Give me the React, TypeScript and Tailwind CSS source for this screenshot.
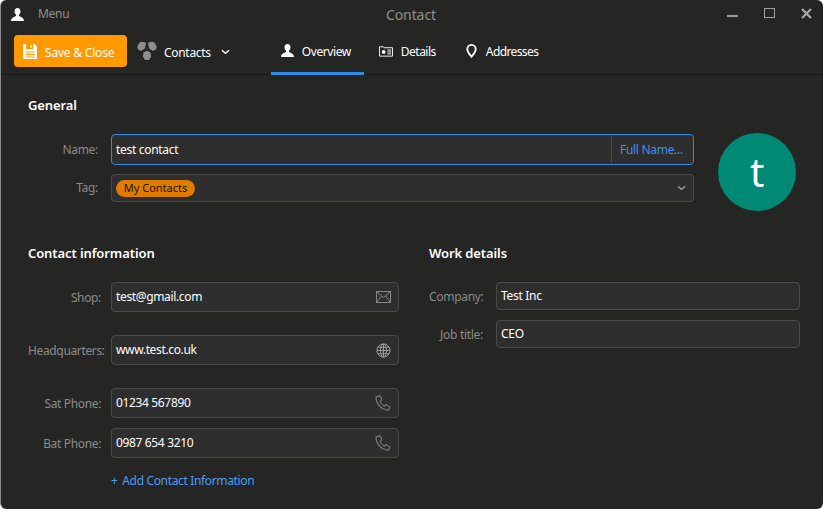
import React from "react";

const Person = ({ className = "" }: { className?: string }) => (
  <svg viewBox="0 0 13 13" className={className} fill="currentColor">
    <path d="M6.500 0C4.600 0 3.500 1.400 3.500 3.300c0 1.500.6 2.700 1.500 3.400v1.200C3.500 8.800.3 9.300 0 13h13c-.3-3.700-3.500-4.200-5-5.100V6.700c.9-.7 1.500-1.900 1.500-3.400C9.500 1.400 8.400 0 6.500 0z" />
  </svg>
);

const Phone = () => (
  <svg viewBox="0 0 16 16" className="w-[16px] h-[16px] text-[#808080]" fill="none" stroke="currentColor" strokeWidth="1.100">
    <path d="M1.800 1.600 4.300 .9c.5-.1.800.1 1 .5l1.300 2.900c.1.400 0 .7-.3 1L5 6.400c.8 2 2.300 3.700 4.300 4.700l1.300-1.100c.3-.2.600-.3 1-.1l2.800 1.700c.4.200.5.600.3 1l-.9 2c-.3.500-.9.800-1.800.7C6.500 14.500 1.400 8.800 1 3.500c-.1-.9.200-1.500.8-1.900z" />
  </svg>
);

const Mail = () => (
  <svg viewBox="0 0 15 12" className="w-[15px] h-[12px] text-[#8a8a8a]" fill="none" stroke="currentColor" strokeWidth="1">
    <rect x=".5" y=".5" width="14" height="11" />
    <path d="M.5.5 7.500 6.500 14.500.5M.5 11.500 5.500 5M14.500 11.500 9.500 5" />
  </svg>
);

const Globe = () => (
  <svg viewBox="0 0 16 16" className="w-[15px] h-[15px] text-[#a0a0a0]" fill="none" stroke="currentColor" strokeWidth="1">
    <circle cx="8" cy="8" r="7" />
    <ellipse cx="8" cy="8" rx="3.200" ry="7" />
    <path d="M8 1v14M1 8h14M2 4.500h12M2 11.500h12" />
  </svg>
);

const Field = ({
  label,
  value,
  icon,
  h = "h-[30px]",
  labelClass,
  mt = "",
}: {
  label: string;
  value: string;
  icon?: React.ReactNode;
  h?: string;
  labelClass: string;
  mt?: string;
}) => (
  <div className={`flex items-center ${mt}`}>
    <span className={`${labelClass} shrink-0 text-right text-[#8b8b8b] pt-[1px] whitespace-nowrap`}>{label}</span>
    <div className={`flex-1 ${h} flex items-center justify-between rounded-[4px] border border-[#4a4a4a] bg-[#2e2e2e] pl-[4px] pr-[7px] text-white`}>
      <span>{value}</span>
      {icon}
    </div>
  </div>
);

export default function App() {
  return (
    <div
      className="w-[823px] h-[509px] bg-[#252624] overflow-hidden flex flex-col text-[12px] leading-[16px] rounded-[6px] border-l border-[#8a8a8a] tracking-[-0.3px]"
      style={{ fontFamily: '"Noto Sans", sans-serif' }}
    >
      <header className="h-[28px] shrink-0 flex items-center relative">
        <Person className="w-[13px] h-[13px] text-white ml-[10px]" />
        <span className="ml-[14px] text-[#8f8f8f]">Menu</span>
        <span className="absolute left-[385px] top-[6px] text-[14px] leading-[18px] text-[#8f8f8f] tracking-[-0.1px]">Contact</span>
        <div className="ml-auto flex items-center mr-[11px] gap-[26px] mb-[2px] text-[#9a9a9a]">
          <div className="w-[11px] h-[2px] bg-[#9a9a9a] mt-[6px]" />
          <div className="w-[11px] h-[10px] border border-[#a0a0a0]" />
          <svg viewBox="0 0 11 11" className="w-[11px] h-[11px]" stroke="#a8a8a8" strokeWidth="2.200" fill="none">
            <path d="M1 1l9 9M10 1l-9 9" />
          </svg>
        </div>
      </header>

      <nav className="h-[47px] shrink-0 flex border-b border-[#191a19] relative tracking-[-0.42px]">
        <button className="ml-[13px] mt-[7px] w-[113px] h-[32px] rounded-[4px] bg-[#ff9900] text-white flex items-center pl-[9px] tracking-[-0.2px]">
          <svg viewBox="0 0 14 15" className="w-[14px] h-[15px]">
            <path d="M0 0h11.500L14 2.500V15H0z" fill="white" />
            <path d="M3 0h7v5H3z" fill="#ff9900" />
            <path d="M7.500 1h1.500v3H7.500z" fill="white" />
            <path d="M2.500 7.500h9v1h-9zM2.500 10h9v1h-9zM2.500 12.500h9v1h-9z" fill="#ff9900" />
          </svg>
          <span className="ml-[8px] mt-[3px]">Save &amp; Close</span>
        </button>
        <div className="flex items-center h-[32px] mt-[7px] ml-[10px] text-white tracking-[-0.3px]">
          <svg viewBox="0 0 20 20" className="w-[20px] h-[20px]" fill="#8e8e8e">
            <path d="M4.500.8C7 .6 8.500 1.500 9 2.500L7.800 7.500 4.500 9.800C2 9.800.6 8 .4 6.500.4 4 2 1.500 4.500.8z" />
            <path d="M15.500.8C13 .6 11.500 1.500 11 2.500l1.200 5 3.300 2.300c2.500 0 3.900-1.800 4.100-3.300 0-2.500-1.600-5-4.100-5.700z" />
            <path d="M6.500 11.500 10 9.800l3.500 1.700.6 4-2.100 3.600H8l-2.100-3.600z" />
          </svg>
          <span className="ml-[7px] mt-[3px]">Contacts</span>
          <svg viewBox="0 0 10 6" className="w-[9px] h-[6px] ml-[10px] mt-[2px]" fill="none" stroke="white" strokeWidth="1.500">
            <path d="M1 1l4 3.500L9 1" />
          </svg>
        </div>
        <div className="ml-[41px] w-[93px] relative flex items-start justify-center pt-[16px] pr-[3px] text-white">
          <Person className="w-[13px] h-[13px] mr-[8px]" />
          <span>Overview</span>
          <div className="absolute left-0 right-0 bottom-[-1px] h-[3px] bg-[#2e8be6]" />
        </div>
        <div className="ml-[15px] flex items-start pt-[16px] text-white tracking-[-0.5px]">
          <svg viewBox="0 0 15 12" className="w-[14px] h-[12px] mr-[8px] mt-[1px]" fill="none" stroke="white" strokeWidth="1">
            <path d="M.5 1.500h4l1 1h9v9H.5z" />
            <circle cx="5" cy="7" r="2" fill="white" stroke="none" />
            <path d="M9 5h4M9 7h4M9 9h4" />
          </svg>
          <span>Details</span>
        </div>
        <div className="ml-[30px] flex items-start pt-[16px] text-white tracking-[-0.6px]">
          <svg viewBox="0 0 11 15" className="w-[11px] h-[14px] mr-[9px]" fill="none" stroke="white" strokeWidth="2">
            <path d="M5.500 13.500C3.500 11 1 8.500 1 5.500a4.500 4.500 0 0 1 9 0c0 3-2.500 5.500-4.500 8z" />
          </svg>
          <span>Addresses</span>
        </div>
      </nav>

      <main className="flex-1 pl-[27px] pr-[23px]">
        <h2 className="mt-[21px] text-[13px] leading-[18px] font-semibold text-white tracking-[-0.1px]">General</h2>
        <div className="mt-[20px] flex">
          <div className="w-[666px] flex flex-col">
            <div className="flex items-center h-[31px]">
              <span className="w-[70px] text-right text-[#8b8b8b] pt-[1px]">Name:</span>
              <div className="ml-[13px] flex-1 h-[31px] flex items-center rounded-[4px] border border-[#2e8be6] bg-[#2e2e2e] text-white">
                <span className="pl-[4px] flex-1">test contact</span>
                <div className="h-[27px] w-[82px] border-l border-[#4a4a4a] pl-[8px] flex items-center text-[#3f8ff0]">Full Name...</div>
              </div>
            </div>
            <div className="flex items-center h-[28px] mt-[9px]">
              <span className="w-[70px] text-right text-[#8b8b8b]">Tag:</span>
              <div className="ml-[13px] flex-1 h-[28px] flex items-center justify-between rounded-[4px] border border-[#4a4a4a] bg-[#2e2e2e] pl-[4px] pr-[7px]">
                <span className="h-[17px] w-[79px] rounded-full bg-[#de7b00] text-[#1c1400] text-[11px] leading-[16px] flex justify-center tracking-normal">My Contacts</span>
                <svg viewBox="0 0 10 6" className="w-[9px] h-[6px]" fill="none" stroke="#9a9a9a" strokeWidth="1.500">
                  <path d="M1 1l4 3.500L9 1" />
                </svg>
              </div>
            </div>
          </div>
          <div className="ml-[24px] mt-[-1px] w-[78px] h-[78px] rounded-full bg-[#008a76] text-white flex items-center justify-center text-[40px] leading-none">t</div>
        </div>

        <div className="mt-[33px] flex">
          <section className="w-[371px]">
            <h2 className="text-[13px] leading-[18px] font-semibold text-white tracking-[-0.1px]">Contact information</h2>
            <div className="mt-[20px] flex flex-col tracking-[-0.35px]">
              <Field label="Shop:" value="test@gmail.com" labelClass="w-[73px] mr-[10px]" icon={<Mail />} />
              <Field label="Headquarters:" value="www.test.co.uk" labelClass="w-[73px] mr-[10px]" icon={<Globe />} mt="mt-[23px]" />
              <Field label="Sat Phone:" value="01234 567890" labelClass="w-[73px] mr-[10px]" icon={<Phone />} mt="mt-[23px]" />
              <Field label="Bat Phone:" value="0987 654 3210" labelClass="w-[73px] mr-[10px]" icon={<Phone />} mt="mt-[10px]" />
              <div className="pl-[83px] mt-[15px] text-[#4c9cf5]">
                + <span className="ml-[2px]">Add Contact Information</span>
              </div>
            </div>
          </section>
          <section className="ml-[30px] flex-1">
            <h2 className="text-[13px] leading-[18px] font-semibold text-white tracking-[-0.1px]">Work details</h2>
            <div className="mt-[20px] flex flex-col gap-[10px]">
              <Field label="Company:" value="Test Inc" h="h-[28px]" labelClass="w-[54px] mr-[13px]" />
              <Field label="Job title:" value="CEO" h="h-[28px]" labelClass="w-[54px] mr-[13px]" />
            </div>
          </section>
        </div>
      </main>
    </div>
  );
}
